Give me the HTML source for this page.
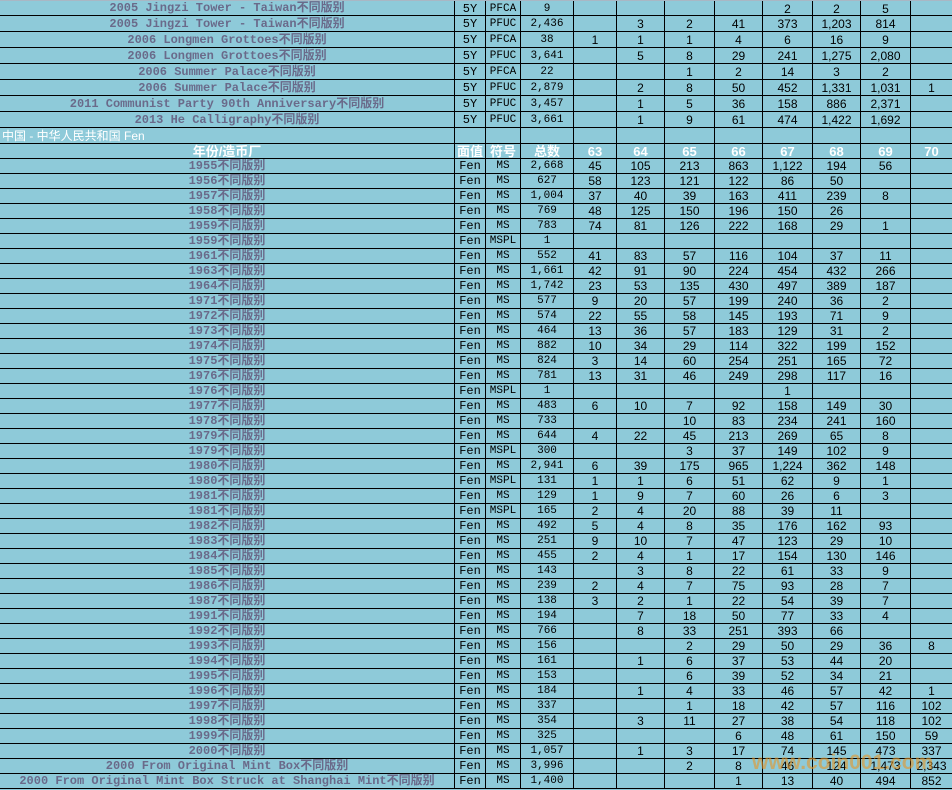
<!DOCTYPE html>
<html><head><meta charset="utf-8">
<style>
*{margin:0;padding:0;box-sizing:border-box}
body{width:952px;height:790px;overflow:hidden;background:#8ecad9;font-family:"Liberation Sans","Noto Sans CJK SC",sans-serif;position:relative}
.r{display:flex;height:15px;border-bottom:1px solid #000}
.t{height:16px}
.r>div{border-right:1px solid #000;text-align:center;font-size:12px;line-height:15px;white-space:nowrap;overflow:hidden;color:#000}
.t>div{line-height:16px}
.r>div:last-child{border-right:none}
.r>div:nth-child(1){width:455px;color:#6a6a8a;font-weight:bold;font-family:"Liberation Mono","Noto Sans CJK SC",monospace;font-size:12px}
.r>div:nth-child(2){width:31px;font-family:"Liberation Mono",monospace;font-size:12px}
.r>div:nth-child(3){width:35px;font-family:"Liberation Mono",monospace;font-size:11px}
.r>div:nth-child(4){width:53px;font-family:"Liberation Mono",monospace;font-size:11px}
.r>div:nth-child(5){width:43px}
.r>div:nth-child(6){width:48px}
.r>div:nth-child(7){width:50px}
.r>div:nth-child(8){width:48px}
.r>div:nth-child(9){width:50px}
.r>div:nth-child(10){width:48px}
.r>div:nth-child(11){width:50px}
.r>div:nth-child(12){width:41px}
.h>div{color:#fff!important;font-weight:bold;font-family:"Liberation Sans","Noto Sans CJK SC",sans-serif!important;font-size:13px!important}
.s>div:nth-child(1){color:#fff;font-weight:normal;text-align:left;padding-left:2px;font-family:"Liberation Sans","Noto Sans CJK SC",sans-serif}
.wm{position:absolute;left:752px;top:751px;font-size:21px;font-weight:bold;color:rgba(230,150,40,0.6);font-family:"Liberation Sans",sans-serif}
</style></head><body>
<div style="border-top:1px solid #a9b7c4;height:0"></div>
<div class="r t" style="height:15px"><div style="line-height:15px">2005 Jingzi Tower - Taiwan不同版别</div><div>5Y</div><div>PFCA</div><div>9</div><div></div><div></div><div></div><div></div><div>2</div><div>2</div><div>5</div><div></div></div>
<div class="r t"><div>2005 Jingzi Tower - Taiwan不同版别</div><div>5Y</div><div>PFUC</div><div>2,436</div><div></div><div>3</div><div>2</div><div>41</div><div>373</div><div>1,203</div><div>814</div><div></div></div>
<div class="r t"><div>2006 Longmen Grottoes不同版别</div><div>5Y</div><div>PFCA</div><div>38</div><div>1</div><div>1</div><div>1</div><div>4</div><div>6</div><div>16</div><div>9</div><div></div></div>
<div class="r t"><div>2006 Longmen Grottoes不同版别</div><div>5Y</div><div>PFUC</div><div>3,641</div><div></div><div>5</div><div>8</div><div>29</div><div>241</div><div>1,275</div><div>2,080</div><div></div></div>
<div class="r t"><div>2006 Summer Palace不同版别</div><div>5Y</div><div>PFCA</div><div>22</div><div></div><div></div><div>1</div><div>2</div><div>14</div><div>3</div><div>2</div><div></div></div>
<div class="r t"><div>2006 Summer Palace不同版别</div><div>5Y</div><div>PFUC</div><div>2,879</div><div></div><div>2</div><div>8</div><div>50</div><div>452</div><div>1,331</div><div>1,031</div><div>1</div></div>
<div class="r t"><div>2011 Communist Party 90th Anniversary不同版别</div><div>5Y</div><div>PFUC</div><div>3,457</div><div></div><div>1</div><div>5</div><div>36</div><div>158</div><div>886</div><div>2,371</div><div></div></div>
<div class="r t"><div>2013 He Calligraphy不同版别</div><div>5Y</div><div>PFUC</div><div>3,661</div><div></div><div>1</div><div>9</div><div>61</div><div>474</div><div>1,422</div><div>1,692</div><div></div></div>
<div class="r t s"><div>中国 - 中华人民共和国 Fen</div><div></div><div></div><div></div><div></div><div></div><div></div><div></div><div></div><div></div><div></div><div></div></div>
<div class="r h"><div>年份/造币厂</div><div>面值</div><div>符号</div><div>总数</div><div>63</div><div>64</div><div>65</div><div>66</div><div>67</div><div>68</div><div>69</div><div>70</div></div>
<div class="r"><div>1955不同版别</div><div>Fen</div><div>MS</div><div>2,668</div><div>45</div><div>105</div><div>213</div><div>863</div><div>1,122</div><div>194</div><div>56</div><div></div></div>
<div class="r"><div>1956不同版别</div><div>Fen</div><div>MS</div><div>627</div><div>58</div><div>123</div><div>121</div><div>122</div><div>86</div><div>50</div><div></div><div></div></div>
<div class="r"><div>1957不同版别</div><div>Fen</div><div>MS</div><div>1,004</div><div>37</div><div>40</div><div>39</div><div>163</div><div>411</div><div>239</div><div>8</div><div></div></div>
<div class="r"><div>1958不同版别</div><div>Fen</div><div>MS</div><div>769</div><div>48</div><div>125</div><div>150</div><div>196</div><div>150</div><div>26</div><div></div><div></div></div>
<div class="r"><div>1959不同版别</div><div>Fen</div><div>MS</div><div>783</div><div>74</div><div>81</div><div>126</div><div>222</div><div>168</div><div>29</div><div>1</div><div></div></div>
<div class="r"><div>1959不同版别</div><div>Fen</div><div>MSPL</div><div>1</div><div></div><div></div><div></div><div></div><div></div><div></div><div></div><div></div></div>
<div class="r"><div>1961不同版别</div><div>Fen</div><div>MS</div><div>552</div><div>41</div><div>83</div><div>57</div><div>116</div><div>104</div><div>37</div><div>11</div><div></div></div>
<div class="r"><div>1963不同版别</div><div>Fen</div><div>MS</div><div>1,661</div><div>42</div><div>91</div><div>90</div><div>224</div><div>454</div><div>432</div><div>266</div><div></div></div>
<div class="r"><div>1964不同版别</div><div>Fen</div><div>MS</div><div>1,742</div><div>23</div><div>53</div><div>135</div><div>430</div><div>497</div><div>389</div><div>187</div><div></div></div>
<div class="r"><div>1971不同版别</div><div>Fen</div><div>MS</div><div>577</div><div>9</div><div>20</div><div>57</div><div>199</div><div>240</div><div>36</div><div>2</div><div></div></div>
<div class="r"><div>1972不同版别</div><div>Fen</div><div>MS</div><div>574</div><div>22</div><div>55</div><div>58</div><div>145</div><div>193</div><div>71</div><div>9</div><div></div></div>
<div class="r"><div>1973不同版别</div><div>Fen</div><div>MS</div><div>464</div><div>13</div><div>36</div><div>57</div><div>183</div><div>129</div><div>31</div><div>2</div><div></div></div>
<div class="r"><div>1974不同版别</div><div>Fen</div><div>MS</div><div>882</div><div>10</div><div>34</div><div>29</div><div>114</div><div>322</div><div>199</div><div>152</div><div></div></div>
<div class="r"><div>1975不同版别</div><div>Fen</div><div>MS</div><div>824</div><div>3</div><div>14</div><div>60</div><div>254</div><div>251</div><div>165</div><div>72</div><div></div></div>
<div class="r"><div>1976不同版别</div><div>Fen</div><div>MS</div><div>781</div><div>13</div><div>31</div><div>46</div><div>249</div><div>298</div><div>117</div><div>16</div><div></div></div>
<div class="r"><div>1976不同版别</div><div>Fen</div><div>MSPL</div><div>1</div><div></div><div></div><div></div><div></div><div>1</div><div></div><div></div><div></div></div>
<div class="r"><div>1977不同版别</div><div>Fen</div><div>MS</div><div>483</div><div>6</div><div>10</div><div>7</div><div>92</div><div>158</div><div>149</div><div>30</div><div></div></div>
<div class="r"><div>1978不同版别</div><div>Fen</div><div>MS</div><div>733</div><div></div><div></div><div>10</div><div>83</div><div>234</div><div>241</div><div>160</div><div></div></div>
<div class="r"><div>1979不同版别</div><div>Fen</div><div>MS</div><div>644</div><div>4</div><div>22</div><div>45</div><div>213</div><div>269</div><div>65</div><div>8</div><div></div></div>
<div class="r"><div>1979不同版别</div><div>Fen</div><div>MSPL</div><div>300</div><div></div><div></div><div>3</div><div>37</div><div>149</div><div>102</div><div>9</div><div></div></div>
<div class="r"><div>1980不同版别</div><div>Fen</div><div>MS</div><div>2,941</div><div>6</div><div>39</div><div>175</div><div>965</div><div>1,224</div><div>362</div><div>148</div><div></div></div>
<div class="r"><div>1980不同版别</div><div>Fen</div><div>MSPL</div><div>131</div><div>1</div><div>1</div><div>6</div><div>51</div><div>62</div><div>9</div><div>1</div><div></div></div>
<div class="r"><div>1981不同版别</div><div>Fen</div><div>MS</div><div>129</div><div>1</div><div>9</div><div>7</div><div>60</div><div>26</div><div>6</div><div>3</div><div></div></div>
<div class="r"><div>1981不同版别</div><div>Fen</div><div>MSPL</div><div>165</div><div>2</div><div>4</div><div>20</div><div>88</div><div>39</div><div>11</div><div></div><div></div></div>
<div class="r"><div>1982不同版别</div><div>Fen</div><div>MS</div><div>492</div><div>5</div><div>4</div><div>8</div><div>35</div><div>176</div><div>162</div><div>93</div><div></div></div>
<div class="r"><div>1983不同版别</div><div>Fen</div><div>MS</div><div>251</div><div>9</div><div>10</div><div>7</div><div>47</div><div>123</div><div>29</div><div>10</div><div></div></div>
<div class="r"><div>1984不同版别</div><div>Fen</div><div>MS</div><div>455</div><div>2</div><div>4</div><div>1</div><div>17</div><div>154</div><div>130</div><div>146</div><div></div></div>
<div class="r"><div>1985不同版别</div><div>Fen</div><div>MS</div><div>143</div><div></div><div>3</div><div>8</div><div>22</div><div>61</div><div>33</div><div>9</div><div></div></div>
<div class="r"><div>1986不同版别</div><div>Fen</div><div>MS</div><div>239</div><div>2</div><div>4</div><div>7</div><div>75</div><div>93</div><div>28</div><div>7</div><div></div></div>
<div class="r"><div>1987不同版别</div><div>Fen</div><div>MS</div><div>138</div><div>3</div><div>2</div><div>1</div><div>22</div><div>54</div><div>39</div><div>7</div><div></div></div>
<div class="r"><div>1991不同版别</div><div>Fen</div><div>MS</div><div>194</div><div></div><div>7</div><div>18</div><div>50</div><div>77</div><div>33</div><div>4</div><div></div></div>
<div class="r"><div>1992不同版别</div><div>Fen</div><div>MS</div><div>766</div><div></div><div>8</div><div>33</div><div>251</div><div>393</div><div>66</div><div></div><div></div></div>
<div class="r"><div>1993不同版别</div><div>Fen</div><div>MS</div><div>156</div><div></div><div></div><div>2</div><div>29</div><div>50</div><div>29</div><div>36</div><div>8</div></div>
<div class="r"><div>1994不同版别</div><div>Fen</div><div>MS</div><div>161</div><div></div><div>1</div><div>6</div><div>37</div><div>53</div><div>44</div><div>20</div><div></div></div>
<div class="r"><div>1995不同版别</div><div>Fen</div><div>MS</div><div>153</div><div></div><div></div><div>6</div><div>39</div><div>52</div><div>34</div><div>21</div><div></div></div>
<div class="r"><div>1996不同版别</div><div>Fen</div><div>MS</div><div>184</div><div></div><div>1</div><div>4</div><div>33</div><div>46</div><div>57</div><div>42</div><div>1</div></div>
<div class="r"><div>1997不同版别</div><div>Fen</div><div>MS</div><div>337</div><div></div><div></div><div>1</div><div>18</div><div>42</div><div>57</div><div>116</div><div>102</div></div>
<div class="r"><div>1998不同版别</div><div>Fen</div><div>MS</div><div>354</div><div></div><div>3</div><div>11</div><div>27</div><div>38</div><div>54</div><div>118</div><div>102</div></div>
<div class="r"><div>1999不同版别</div><div>Fen</div><div>MS</div><div>325</div><div></div><div></div><div></div><div>6</div><div>48</div><div>61</div><div>150</div><div>59</div></div>
<div class="r"><div>2000不同版别</div><div>Fen</div><div>MS</div><div>1,057</div><div></div><div>1</div><div>3</div><div>17</div><div>74</div><div>145</div><div>473</div><div>337</div></div>
<div class="r"><div>2000 From Original Mint Box不同版别</div><div>Fen</div><div>MS</div><div>3,996</div><div></div><div></div><div>2</div><div>8</div><div>46</div><div>124</div><div>1,473</div><div>2,343</div></div>
<div class="r"><div>2000 From Original Mint Box Struck at Shanghai Mint不同版别</div><div>Fen</div><div>MS</div><div>1,400</div><div></div><div></div><div></div><div>1</div><div>13</div><div>40</div><div>494</div><div>852</div></div>
<div class="wm">www.coin001.com</div>
</body></html>
